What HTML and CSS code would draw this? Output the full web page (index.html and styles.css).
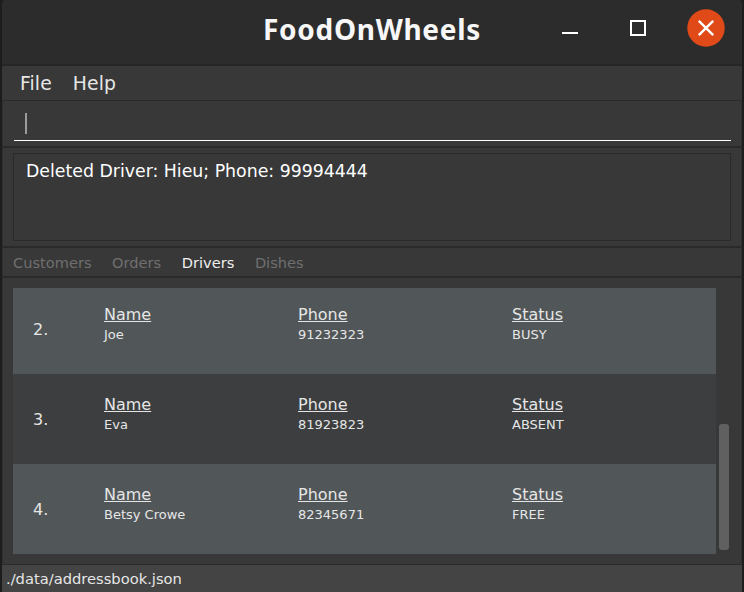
FILE: index.html
```
<!DOCTYPE html>
<html lang="en">
<head>
<meta charset="utf-8">
<title>FoodOnWheels</title>
<link rel="stylesheet" href="styles.css">
</head>
<body>
<div class="window">
  <header class="titlebar">
    <h1>FoodOnWheels</h1>
    <svg class="controls" width="170" height="50" viewBox="2 0 170 50">
      <path d="M8 33H24" stroke="#fff" stroke-width="2"/>
      <rect x="77" y="21" width="14" height="14" fill="none" stroke="#fff" stroke-width="2"/>
      <circle cx="152" cy="28" r="18.7" fill="#e04a19"/>
      <path d="M144.8 20.8L159.2 35.2M159.2 20.8L144.8 35.2" stroke="#fff" stroke-width="2.4"/>
    </svg>
  </header>
  <nav class="menu"><span>File</span><span>Help</span></nav>
  <div class="content">
    <section class="command"><div class="field"><i class="caret"></i></div></section>
    <section class="result"><div class="message">Deleted Driver: Hieu; Phone: 99994444</div></section>
    <nav class="tabs"><span>Customers</span><span>Orders</span><span class="active">Drivers</span><span>Dishes</span></nav>
    <main class="listing">
      <div class="rows">
        <article class="row first"><b>2.</b><dl><dt>Name</dt><dd>Joe</dd></dl><dl><dt>Phone</dt><dd>91232323</dd></dl><dl><dt>Status</dt><dd>BUSY</dd></dl></article>
        <article class="row odd"><b>3.</b><dl><dt>Name</dt><dd>Eva</dd></dl><dl><dt>Phone</dt><dd>81923823</dd></dl><dl><dt>Status</dt><dd>ABSENT</dd></dl></article>
        <article class="row"><b>4.</b><dl><dt>Name</dt><dd>Betsy Crowe</dd></dl><dl><dt>Phone</dt><dd>82345671</dd></dl><dl><dt>Status</dt><dd>FREE</dd></dl></article>
      </div>
      <div class="scroll"><div class="thumb"></div></div>
    </main>
  </div>
  <footer>./data/addressbook.json</footer>
</div>
</body>
</html>
```
FILE: styles.css
```
* { box-sizing: border-box; margin: 0; padding: 0; }
body {
  width: 744px;
  height: 592px;
  overflow: hidden;
  background: #1d1d1d;
  font-family: "DejaVu Sans", sans-serif;
  color: #e6e6e6;
  white-space: nowrap;
}
.window {
  width: 740px;
  height: 592px;
  margin: 0 2px;
  background: #383838;
  border-radius: 4px 4px 0 0;
  overflow: hidden;
}
.titlebar {
  height: 66px;
  background: #2c2c2c;
  border-bottom: 2px solid #262626;
  display: grid;
  grid-template-columns: 186px 1fr 186px;
}
.titlebar h1 {
  grid-column: 2;
  text-align: center;
  font: bold 28px/58px "Noto Sans", sans-serif;
  letter-spacing: 0.7px;
  color: #f7f7f7;
}
.controls { display: block; }
.menu {
  height: 35px;
  border-bottom: 1px solid #2a2a2a;
  padding-left: 18px;
  display: flex;
  gap: 21px;
  font-size: 18.8px;
  letter-spacing: 0.1px;
  line-height: 36px;
}
.content {
  height: 463px;
  border: solid #2e2e2e;
  border-width: 0 1px;
}
.command {
  height: 47px;
  padding: 0 10px 0 11px;
  border-bottom: 2px solid #2a2a2a;
}
.field {
  height: 40px;
  border-bottom: 1px solid #fff;
  padding: 12px 0 0 11px;
}
.caret { display: block; width: 2px; height: 21px; background: #9b9b9b; }
.result {
  height: 100px;
  padding: 5px 10px;
  border-bottom: 2px solid #2a2a2a;
}
.message {
  height: 88px;
  border: 1px solid #2a2a2a;
  padding-left: 12px;
  font-size: 17.33px;
  line-height: 34px;
  color: #fff;
}
.tabs {
  height: 30px;
  border-bottom: 2px solid #2a2a2a;
  padding-left: 10px;
  display: flex;
  gap: 20.6px;
  font-size: 14.6px;
  line-height: 29px;
  color: #6f6f6f;
}
.tabs .active { color: #efefef; }
.listing { display: flex; padding: 10px 0 0 10px; }
.rows { width: 703px; }
.row {
  height: 90px;
  background: #515658;
  display: grid;
  grid-template-columns: 71px 194px 214px 1fr;
  padding: 21px 0 0 20px;
}
.row.first { height: 86px; padding-top: 17px; }
.row.odd { background: #3c3e3f; }
.row b { font-size: 16px; font-weight: normal; line-height: 50px; }
.row dt { font-size: 16px; line-height: 20px; text-decoration: underline; }
.row dd { font-size: 13px; line-height: 20px; }
.scroll { width: 16px; padding: 136px 0 0 3px; }
.thumb { width: 10px; height: 126px; border-radius: 3px; background: #606060; }
footer {
  height: 28px;
  border-top: 1px solid #2a2a2a;
  background: #444;
  padding-left: 4px;
  font-size: 14.7px;
  line-height: 28px;
}
```
